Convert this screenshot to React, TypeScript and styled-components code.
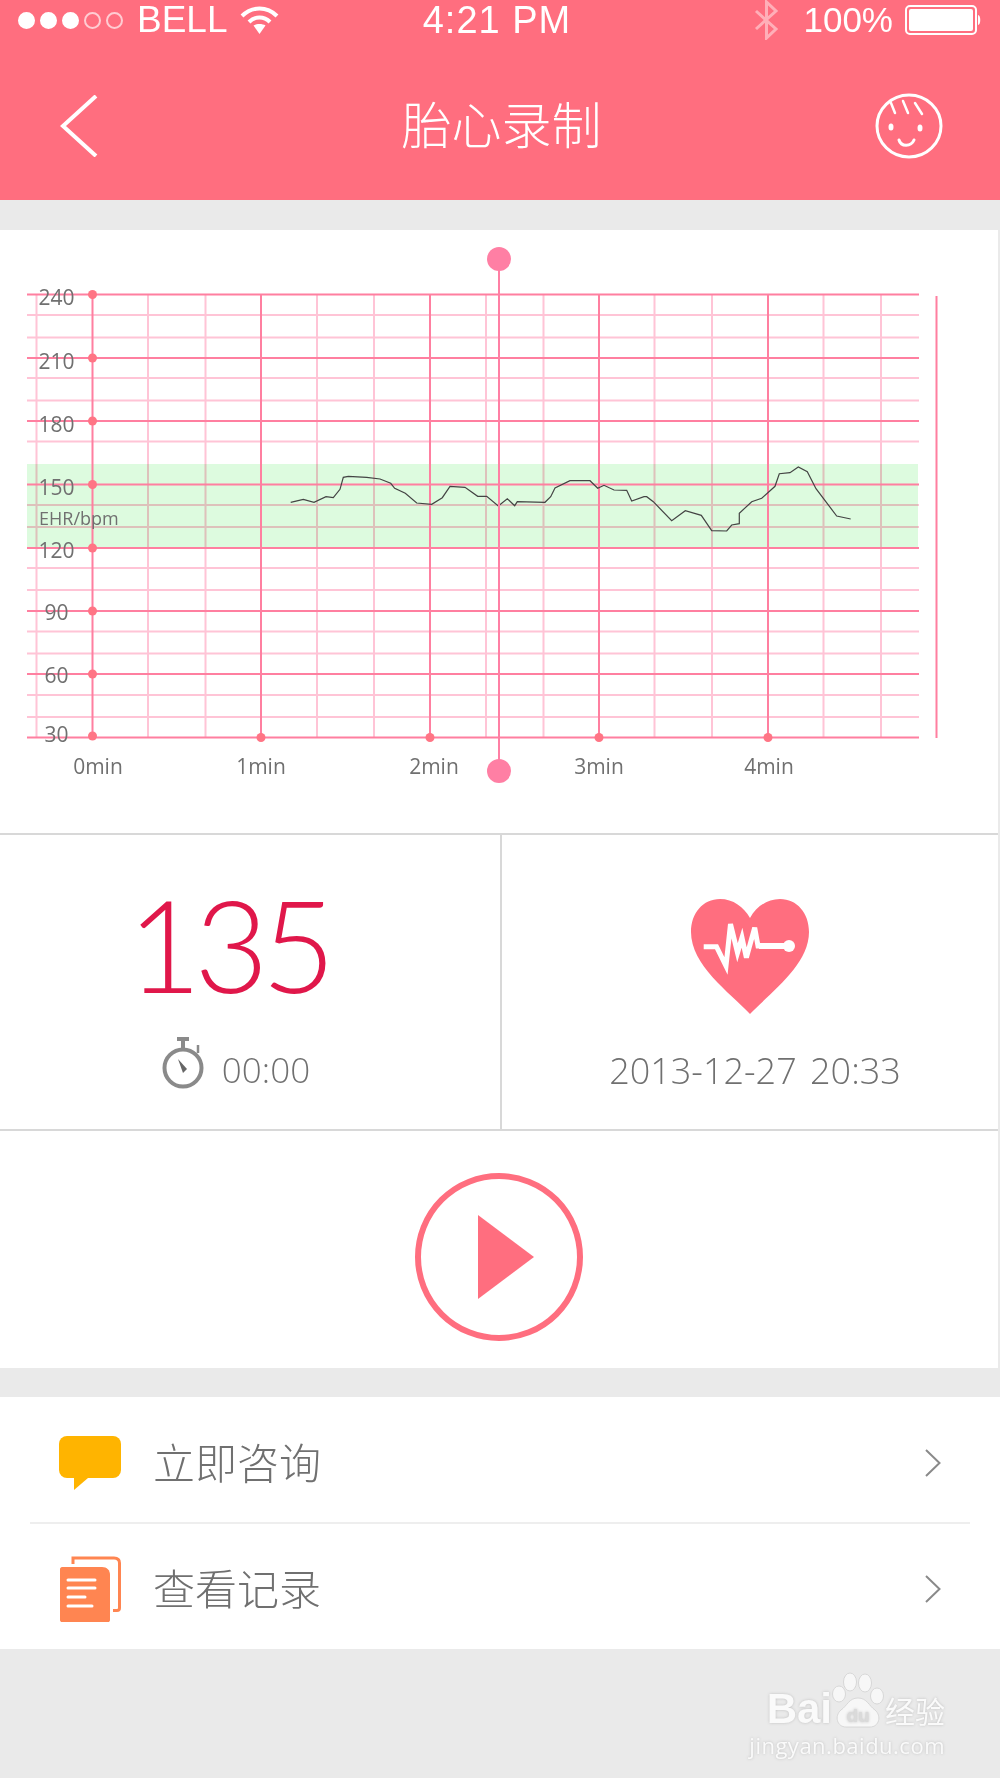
import React from 'react';
import styled, { createGlobalStyle } from 'styled-components';

const pink = '#FF6E7F';
const grey = '#EAEAEA';
const rule = '#D8D8D8';
const textGrey = '#707070';
const sans = '"Open Sans", "Noto Sans CJK SC", sans-serif';

const GlobalStyle = createGlobalStyle`
  html, body {
    margin: 0;
    padding: 0;
    background: ${grey};
  }
`;

const Page = styled.div`
  width: 1000px;
  height: 1778px;
  display: flex;
  flex-direction: column;
  overflow: hidden;

  background: ${grey};
  font-family: ${sans};
`;

const Header = styled.header`
  height: 200px;
  flex-shrink: 0;
  background: ${pink};
  color: #fff;
`;

const StatusBar = styled.div`
  height: 40px;
  padding: 0 19px 0 18px;
  display: grid;
  grid-template-columns: 1fr auto 1fr;
  align-items: center;

  font-family: "Liberation Sans", Arial, sans-serif;
`;

const StatusLeft = styled.div`
  display: flex;
  align-items: center;
`;

const StatusRight = styled.div`
  display: flex;
  align-items: center;
  justify-content: flex-end;
`;

const Signal = styled.div`
  display: flex;
  gap: 5px;
  margin-right: 14px;
`;

const SignalDot = styled.span<{ $on: boolean }>`
  width: 17px;
  height: 17px;
  box-sizing: border-box;
  border-radius: 50%;
  border: 2px solid ${p => (p.$on ? '#fff' : 'rgba(255, 255, 255, 0.65)')};
  background: ${p => (p.$on ? '#fff' : 'transparent')};
`;

const Carrier = styled.span`
  font-size: 37px;
  line-height: 40px;
  margin-right: 12px;
`;

const Clock = styled.span`
  margin-left: -5px;
  font-size: 38px;
  line-height: 40px;
  letter-spacing: 1px;
`;

const Battery = styled.span`
  font-size: 35px;
  line-height: 40px;
  margin: 0 12px 0 24px;
`;

const NavBar = styled.nav`
  height: 160px;
  box-sizing: border-box;
  padding: 12px 57px 0 60px;
  display: grid;
  grid-template-columns: 1fr auto 1fr;
  align-items: center;
`;

const NavTitle = styled.h1`
  margin: -8px 0 0;
  font-family: "Noto Sans CJK SC", sans-serif;
  font-size: 50px;
  font-weight: 300;
  line-height: 60px;
`;

const NavRight = styled.div`
  display: flex;
  justify-content: flex-end;
`;

const Card = styled.section`
  margin-top: 30px;
  margin-right: 2px;
  flex-shrink: 0;
  background: #fff;
`;

const ChartFrame = styled.svg`
  display: block;
  width: 998px;
  height: 603px;
`;

const GridLine = styled.line<{ $strong?: boolean }>`
  stroke: ${p => (p.$strong ? '#FF7FA0' : '#FFC4D6')};
  stroke-width: 2;
`;

const AxisLabel = styled.text<{ $size?: number }>`
  fill: ${textGrey};
  font-family: ${sans};
  font-size: ${p => p.$size ?? 21}px;
`;

const StatRow = styled.div`
  height: 294px;
  display: flex;
  border-top: 2px solid ${rule};
  border-bottom: 2px solid ${rule};
`;

const StatCell = styled.div`
  box-sizing: border-box;
  display: flex;
  flex-direction: column;
  align-items: center;
`;

const RateCell = styled(StatCell)`
  width: 500px;
  padding-top: 32px;
  padding-right: 30px;
`;

const HeartCell = styled(StatCell)`
  flex: 1;
  padding-top: 64px;
  border-left: 2px solid ${rule};
`;

const Rate = styled.div`
  margin-left: -14px;
  color: #E0174A;
  font-family: Lato, sans-serif;
  font-size: 128px;
  font-weight: 300;
  line-height: 154px;
  letter-spacing: -7px;
`;

const Timer = styled.div`
  margin-top: 25px;
  margin-left: 2px;
  display: flex;
  align-items: center;
  gap: 17px;

  color: ${textGrey};
  font-size: 35px;
  font-weight: 300;

  svg {
    margin-top: -13px;
  }
`;

const DateText = styled.div`
  margin-top: 32px;
  margin-left: 10px;

  color: ${textGrey};
  font-size: 36px;
  font-weight: 300;
  line-height: 50px;
  word-spacing: 4px;
`;

const PlayCard = styled.div`
  margin-right: 2px;
  height: 237px;
  box-sizing: border-box;
  padding-top: 14px;
  display: flex;
  align-items: center;
  justify-content: center;
  flex-shrink: 0;
  background: #fff;
`;

const PlayButton = styled.button`
  width: 168px;
  height: 168px;
  padding: 0 0 0 14px;
  display: flex;
  align-items: center;
  justify-content: center;

  background: #fff;
  border: 6px solid ${pink};
  border-radius: 50%;
`;

const Menu = styled.ul`
  margin: 29px 0 0;
  padding: 0 30px;
  list-style: none;
  background: #fff;
`;

const MenuRow = styled.li`
  height: 126px;
  box-sizing: border-box;
  padding: 5px 29px 0;
  display: flex;
  align-items: center;

  & + & {
    height: 127px;
    margin-top: -1px;
    border-top: 2px solid #EEE;
  }
`;

const MenuIcon = styled.span`
  width: 62px;
  margin-right: 32px;
  display: flex;
  justify-content: flex-end;
`;

const MenuLabel = styled.span`
  flex: 1;
  margin-top: -4px;
  color: ${textGrey};
  font-family: "Noto Sans CJK SC", sans-serif;
  font-size: 42px;
  font-weight: 300;
  line-height: 56px;
`;

const Footer = styled.footer`
  flex: 1;
  padding: 23px 55px 0 0;
  display: flex;
  flex-direction: column;
  align-items: flex-end;

  color: #FAFAFA;
  text-shadow: 0 0 3px #BDBDBD;
`;

const MarkTop = styled.div`
  display: flex;
  align-items: flex-end;
`;

const MarkBai = styled.span`
  font-family: "Liberation Sans", Arial, sans-serif;
  font-size: 42px;
  font-weight: 700;
  line-height: 38px;
`;

const MarkJingyan = styled.span`
  margin-left: 1px;
  font-family: "Noto Sans CJK SC", sans-serif;
  font-size: 30px;
  line-height: 36px;
`;

const MarkUrl = styled.span`
  margin-top: 4px;
  font-size: 22px;
  font-weight: 400;
  line-height: 26px;
  letter-spacing: 0.5px;
`;

const hStrong = [294.5, 358, 421, 484.5, 548, 611, 674, 737.5];
const hLight = [315, 337.5, 378, 400.5, 441.5, 505, 527, 568, 590, 631.5, 653.5, 695, 717];
const vStrong = [92.5, 261, 430, 599, 768];
const vLight = [36.5, 148, 205.5, 317, 374, 486, 543.5, 654.5, 712, 823.5, 881];
const yLabels = [
  ['240', 297], ['210', 361], ['180', 424], ['150', 487],
  ['120', 550], ['90', 612], ['60', 675], ['30', 734],
] as const;
const xLabels = [
  ['0min', 98], ['1min', 261], ['2min', 434], ['3min', 599], ['4min', 769],
] as const;
const trace = '290.7,502.3 303.3,499.3 314,502.3 326,496.7 333.3,497.7 340,489.3 343.3,477.3 348.3,476.3 366.7,477.3 380,479 390.7,483.3 394.7,488.3 405.3,493.3 416.7,503 431.7,504.3 442.3,497.7 450,486.3 465,487.3 477.7,496.3 486.7,496.3 498.3,506 507.3,498.7 514.7,505.7 517.3,501.7 545,502.3 550.7,496.7 555,488 570,480.7 590,480.7 597.7,488.3 604,485.3 614,490 626.7,490.3 631.7,501 644,496.7 646.7,496.7 653.3,501.7 671.7,520.7 685.3,510.7 701.3,515.3 711.7,530.7 726.7,531 731.7,525 739.3,523.7 739.3,513.3 751.7,501.7 761.7,498.3 775,486.3 779.3,473.7 790,472.7 798.3,467 807.3,471.7 816,488.7 836.7,516 850.7,519';

function WifiIcon() {
  return (
    <svg width="39" height="30" viewBox="0 0 39 30" fill="none" stroke="#fff" strokeWidth="4">
      <path d="M2 11C12 1 27 1 37 11" />
      <path d="M9 17C15 11 24 11 30 17" />
      <path d="M19.5 29L13.5 20.5C16.5 18.5 22.5 18.5 25.5 20.5Z" fill="#fff" stroke="none" />
    </svg>
  );
}

function BluetoothIcon() {
  return (
    <svg width="25" height="40" viewBox="0 0 25 40" fill="none" stroke="#fff" strokeOpacity="0.45" strokeWidth="3">
      <path d="M2 11L22 29L12.5 38V2L22 11L2 29" />
    </svg>
  );
}

function BatteryIcon() {
  return (
    <svg width="76" height="30" viewBox="0 0 76 30">
      <rect x="1" y="1" width="70" height="28" rx="4" fill="none" stroke="#fff" strokeWidth="2" />
      <rect x="4" y="4" width="64" height="22" rx="2" fill="#fff" />
      <path d="M73 10C76 10 76 20 73 20Z" fill="#fff" />
    </svg>
  );
}

function BackIcon() {
  return (
    <svg width="38" height="62" viewBox="0 0 38 62" fill="none" stroke="#fff" strokeWidth="4">
      <path d="M36 1L3 31L36 61" />
    </svg>
  );
}

function BabyIcon() {
  return (
    <svg width="68" height="66" viewBox="0 0 68 66" fill="none" stroke="#fff" strokeWidth="3" strokeLinecap="round">
      <ellipse cx="34" cy="33" rx="32" ry="31" />
      <path d="M16 10L20 20M28 8L33 20M40 10L47 21" strokeWidth="2.5" />
      <ellipse cx="16" cy="34" rx="2.5" ry="3.5" fill="#fff" stroke="none" />
      <ellipse cx="45" cy="35" rx="2.5" ry="3.5" fill="#fff" stroke="none" />
      <path d="M24 47C26 54 36 54 39 47" />
    </svg>
  );
}

function HeartIcon() {
  return (
    <svg width="118" height="115" viewBox="0 0 118 115">
      <path
        d="M59 115C38 93 0 66 0 33C0 14 12 0 29 0C42 0 53 8 59 19C65 8 76 0 89 0C106 0 118 14 118 33C118 66 80 93 59 115Z"
        fill={pink}
      />
      <polyline
        points="12.7,47.7 25.5,47.7 35,67 39.5,25 46.5,53.7 51,38.7 55.4,58.7 63.7,28.7 67,47 98,47"
        fill="none"
        stroke="#fff"
        strokeWidth="5"
      />
      <path d="M68 44H96V50H68Z" fill="#fff" />
      <circle cx="98" cy="47" r="6" fill="#fff" />
    </svg>
  );
}

function StopwatchIcon() {
  return (
    <svg width="43" height="52" viewBox="0 0 43 52" fill="none" stroke="#8A8A8A" strokeWidth="4">
      <circle cx="21" cy="31" r="18.5" />
      <path d="M21 3V12M15 2H27" />
      <path d="M36 8V16" strokeWidth="2.5" />
      <path d="M16 22L25 32L21 36Z" fill="#666" stroke="none" />
    </svg>
  );
}

function PlayIcon() {
  return (
    <svg width="56" height="84" viewBox="0 0 56 84">
      <path d="M0 0L56 42L0 84Z" fill={pink} />
    </svg>
  );
}

function BubbleIcon() {
  return (
    <svg width="62" height="54" viewBox="0 0 62 54">
      <rect width="62" height="42" rx="8" fill="#FFB400" />
      <path d="M15 40V54L29 42Z" fill="#FFB400" />
    </svg>
  );
}

function RecordsIcon() {
  return (
    <svg width="61" height="67" viewBox="0 0 61 67" fill="none">
      <path d="M13 8V2H54C57.5 2 59.5 4 59.5 7V52C59.5 53.5 58.5 54.5 57 54.5H53" stroke="#FF8551" strokeWidth="3" />
      <path d="M2 11H42C47 11 50 14 50 19V64C50 65.5 49 66 48 66H2C1 66 0 65.5 0 64V13C0 12 1 11 2 11Z" fill="#FF8551" />
      <path d="M8 24H35M8 32H35M8 41H25M8 50H32" stroke="#fff" strokeWidth="3" strokeLinecap="round" />
    </svg>
  );
}

function ChevronIcon() {
  return (
    <svg width="16" height="28" viewBox="0 0 16 28" fill="none" stroke="#8A8A8A" strokeWidth="2">
      <path d="M1 1L14.5 14L1 27" />
    </svg>
  );
}

function PawMark() {
  return (
    <svg width="52" height="56" viewBox="0 0 52 56" fill="#F7F7F7" stroke="#D0D0D0" strokeWidth="0.8">
      <ellipse cx="7" cy="22" rx="6.5" ry="8" />
      <ellipse cx="18" cy="10" rx="6.5" ry="9" />
      <ellipse cx="33" cy="11" rx="6.5" ry="9" />
      <ellipse cx="45" cy="24" rx="6.5" ry="8" />
      <path d="M26 26C35 26 37 34 43 38C50 44 47 55 38 55H14C5 55 2 44 9 38C15 34 17 26 26 26Z" />
      <text x="26" y="50" textAnchor="middle" fontFamily="Liberation Sans, sans-serif" fontSize="19" fontWeight="700" fill="#DADADA" stroke="none">du</text>
    </svg>
  );
}

function FetalChart() {
  return (
    <ChartFrame viewBox="0 230 998 603">
      {hLight.map(y => <GridLine key={y} x1="27" x2="919" y1={y} y2={y} />)}
      {vLight.map(x => <GridLine key={x} x1={x} x2={x} y1="294" y2="738" />)}
      <rect x="27" y="464" width="891" height="84" fill="#DDFBDF" style={{ mixBlendMode: 'multiply' }} />
      {hStrong.map(y => <GridLine key={y} $strong x1="27" x2="919" y1={y} y2={y} />)}
      {vStrong.map(x => <GridLine key={x} $strong x1={x} x2={x} y1="294" y2="738" />)}
      <GridLine $strong x1="936.5" x2="936.5" y1="296" y2="738" />
      <polyline points={trace} fill="none" stroke="#444" strokeWidth="1.2" />
      {hStrong.map(y => <circle key={y} cx="92.5" cy={y === 737.5 ? 736 : y} r="4.5" fill="#FF7585" />)}
      {vStrong.slice(1).map(x => <circle key={x} cx={x} cy="737.5" r="4.5" fill="#FF7585" />)}
      <line x1="499" x2="499" y1="259" y2="771" stroke="#FF7FA4" strokeWidth="2" />
      <circle cx="499" cy="259" r="12" fill="#FF7FA4" />
      <circle cx="499" cy="771" r="12" fill="#FF7FA4" />
      {yLabels.map(([label, y]) => (
        <AxisLabel key={label} x="56.5" y={y} textAnchor="middle" dominantBaseline="central">{label}</AxisLabel>
      ))}
      <AxisLabel $size={18} x="39" y="518" dominantBaseline="central">EHR/bpm</AxisLabel>
      {xLabels.map(([label, x]) => (
        <AxisLabel key={label} x={x} y="766" textAnchor="middle" dominantBaseline="central">{label}</AxisLabel>
      ))}
    </ChartFrame>
  );
}

export default function App() {
  return (
    <Page>
      <GlobalStyle />
      <Header>
        <StatusBar>
          <StatusLeft>
            <Signal>
              {[true, true, true, false, false].map((on, i) => <SignalDot key={i} $on={on} />)}
            </Signal>
            <Carrier>BELL</Carrier>
            <WifiIcon />
          </StatusLeft>
          <Clock>4:21 PM</Clock>
          <StatusRight>
            <BluetoothIcon />
            <Battery>100%</Battery>
            <BatteryIcon />
          </StatusRight>
        </StatusBar>
        <NavBar>
          <BackIcon />
          <NavTitle>胎心录制</NavTitle>
          <NavRight>
            <BabyIcon />
          </NavRight>
        </NavBar>
      </Header>

      <Card>
        <FetalChart />
        <StatRow>
          <RateCell>
            <Rate>135</Rate>
            <Timer>
              <StopwatchIcon />
              00:00
            </Timer>
          </RateCell>
          <HeartCell>
            <HeartIcon />
            <DateText>2013-12-27 20:33</DateText>
          </HeartCell>
        </StatRow>
      </Card>

      <PlayCard>
        <PlayButton aria-label="play">
          <PlayIcon />
        </PlayButton>
      </PlayCard>

      <Menu>
        <MenuRow>
          <MenuIcon><BubbleIcon /></MenuIcon>
          <MenuLabel>立即咨询</MenuLabel>
          <ChevronIcon />
        </MenuRow>
        <MenuRow>
          <MenuIcon><RecordsIcon /></MenuIcon>
          <MenuLabel>查看记录</MenuLabel>
          <ChevronIcon />
        </MenuRow>
      </Menu>

      <Footer>
        <MarkTop>
          <MarkBai>Bai</MarkBai>
          <PawMark />
          <MarkJingyan>经验</MarkJingyan>
        </MarkTop>
        <MarkUrl>jingyan.baidu.com</MarkUrl>
      </Footer>
    </Page>
  );
}
